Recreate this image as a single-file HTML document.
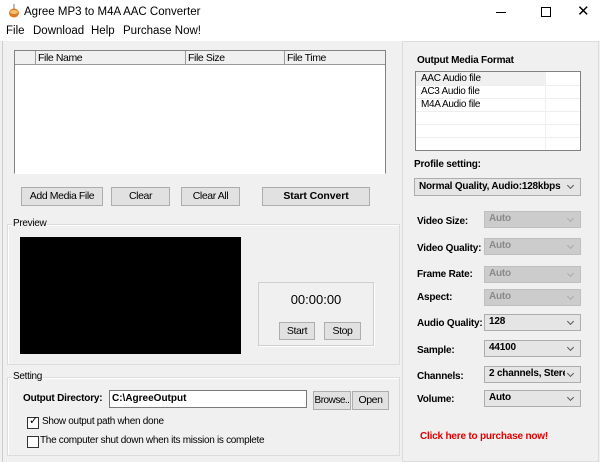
<!DOCTYPE html>
<html><head><style>
*{box-sizing:border-box;margin:0;padding:0}
body{width:600px;height:462px;background:#f0f0f0;font-family:"Liberation Sans",sans-serif;font-size:11px;color:#000;position:relative;overflow:hidden}
.a{position:absolute;white-space:nowrap}
.btn{position:absolute;background:#e1e1e1;border:1px solid #adadad;text-align:center;font-size:10.5px;letter-spacing:-0.4px;white-space:nowrap}
.grp{position:absolute;border:1px solid #dcdcdc;box-shadow:inset 1px 1px 0 #fff}
.dd{position:absolute;background:#e5e5e5;border:1px solid #adadad;height:17px;font-weight:bold;font-size:10px;letter-spacing:-0.2px;padding:1px 4px;overflow:hidden;white-space:nowrap}
.dd.dis{background:#ccc;border-color:#bfbfbf;color:#8a8a8a}
.dd:after{content:"";position:absolute;right:7px;top:4px;width:4px;height:4px;border-right:1px solid #555;border-bottom:1px solid #555;transform:rotate(45deg)}
.dd.dis:after{border-color:#aaa}
.lb{position:absolute;font-weight:bold;font-size:10px;letter-spacing:-0.2px;white-space:nowrap}
</style></head><body>
<div class="a" style="left:0;top:0;width:600px;height:41px;background:#fff"></div>
<svg class="a" style="left:8px;top:4px" width="12" height="14" viewBox="0 0 12 14"><rect x="5" y="0" width="2" height="5" fill="#bbb"/><ellipse cx="6" cy="9" rx="5" ry="4.5" fill="#e07a20"/><ellipse cx="6" cy="8" rx="4" ry="2" fill="#f5c070"/></svg>
<div class="a" style="left:24px;top:6px;font-size:11.5px">Agree MP3 to M4A AAC Converter</div>
<div class="a" style="left:496px;top:12px;width:10px;height:1px;background:#000"></div>
<div class="a" style="left:541px;top:7px;width:10px;height:10px;border:1px solid #000"></div>
<div class="a" style="left:577px;top:5px;font-size:15px;line-height:14px">✕</div>
<div class="a" style="left:6px;top:25px;font-size:11.5px">File</div>
<div class="a" style="left:33px;top:25px;font-size:11.5px">Download</div>
<div class="a" style="left:91px;top:25px;font-size:11.5px">Help</div>
<div class="a" style="left:123px;top:25px;font-size:11.5px">Purchase Now!</div>
<div class="a" style="left:2px;top:41px;width:1px;height:421px;background:#ccc"></div>

<div class="a" style="left:14px;top:50px;width:372px;height:124px;background:#fff;border:1px solid #828282;border-bottom-color:#fff"></div>
<div class="a" style="left:15px;top:51px;width:370px;height:14px;background:#f0f0f0;border-bottom:1px solid #999"></div>
<div class="a" style="left:35px;top:51px;width:1px;height:14px;background:#999"></div>
<div class="a" style="left:185px;top:51px;width:1px;height:14px;background:#999"></div>
<div class="a" style="left:284px;top:51px;width:1px;height:14px;background:#999"></div>
<div class="a" style="left:38px;top:52px;font-size:10.5px;letter-spacing:-.4px">File Name</div>
<div class="a" style="left:188px;top:52px;font-size:10.5px;letter-spacing:-.4px">File Size</div>
<div class="a" style="left:287px;top:52px;font-size:10.5px;letter-spacing:-.4px">File Time</div>

<div class="btn" style="left:21px;top:187px;width:82px;height:19px;line-height:17px">Add Media File</div>
<div class="btn" style="left:111px;top:187px;width:59px;height:19px;line-height:17px">Clear</div>
<div class="btn" style="left:181px;top:187px;width:59px;height:19px;line-height:17px">Clear All</div>
<div class="btn" style="left:262px;top:187px;width:108px;height:19px;line-height:17px;font-weight:bold;letter-spacing:-0.1px">Start Convert</div>

<div class="grp" style="left:7px;top:224px;width:393px;height:141px"></div>
<div class="a" style="left:12px;top:218px;background:#f0f0f0;padding:0 1px;font-size:10px;letter-spacing:-.3px">Preview</div>
<div class="a" style="left:20px;top:237px;width:221px;height:117px;background:#000"></div>
<div class="a" style="left:258px;top:282px;width:116px;height:64px;border:1px solid #cfcfcf;box-shadow:1px 1px 0 #fff"></div>
<div class="a" style="left:258px;top:292px;width:116px;text-align:center;font-size:13px">00:00:00</div>
<div class="btn" style="left:279px;top:322px;width:36px;height:18px;line-height:16px">Start</div>
<div class="btn" style="left:324px;top:322px;width:37px;height:18px;line-height:16px">Stop</div>

<div class="grp" style="left:7px;top:377px;width:393px;height:79px"></div>
<div class="a" style="left:12px;top:371px;background:#f0f0f0;padding:0 1px;font-size:10px;letter-spacing:-.3px">Setting</div>
<div class="lb" style="left:23px;top:393px">Output Directory:</div>
<div class="a" style="left:109px;top:390px;width:198px;height:18px;background:#fff;border:1px solid #7a7a7a;font-weight:bold;font-size:10px;padding:2px 2px">C:\AgreeOutput</div>
<div class="btn" style="left:313px;top:391px;width:38px;height:19px;line-height:17px;font-size:10px;letter-spacing:-.5px">Browse..</div>
<div class="btn" style="left:352px;top:391px;width:37px;height:19px;line-height:17px">Open</div>
<div class="a" style="left:27px;top:417px;width:12px;height:12px;background:#fff;border:1px solid #333"></div>
<div class="a" style="left:29px;top:414px;font-size:11px">✓</div>
<div class="a" style="left:42px;top:416px;font-size:10px;letter-spacing:-.3px">Show output path when done</div>
<div class="a" style="left:27px;top:436px;width:12px;height:12px;background:#fff;border:1px solid #333"></div>
<div class="a" style="left:40px;top:435px;font-size:10px;letter-spacing:-.3px">The computer shut down when its mission is complete</div>

<div class="a" style="left:402px;top:41px;width:197px;height:421px;border:1px solid #dcdcdc"></div>
<div class="lb" style="left:417px;top:55px">Output Media Format</div>
<div class="a" style="left:415px;top:71px;width:166px;height:80px;background:#fff;border:1px solid #828282"></div>
<div class="a" style="left:416px;top:72px;width:129px;height:13px;background:#f0f0f0"></div>
<div class="a" style="left:545px;top:72px;width:1px;height:78px;background:#eee"></div>
<div class="a" style="left:416px;top:85px;width:164px;height:1px;background:#eee"></div>
<div class="a" style="left:416px;top:98px;width:164px;height:1px;background:#eee"></div>
<div class="a" style="left:416px;top:111px;width:164px;height:1px;background:#eee"></div>
<div class="a" style="left:416px;top:124px;width:164px;height:1px;background:#eee"></div>
<div class="a" style="left:416px;top:137px;width:164px;height:1px;background:#eee"></div>
<div class="a" style="left:421px;top:73px;font-size:10px;letter-spacing:-.3px">AAC Audio file</div>
<div class="a" style="left:421px;top:86px;font-size:10px;letter-spacing:-.3px">AC3 Audio file</div>
<div class="a" style="left:421px;top:99px;font-size:10px;letter-spacing:-.3px">M4A Audio file</div>
<div class="lb" style="left:414px;top:159px">Profile setting:</div>
<div class="dd" style="left:414px;top:178px;width:167px;height:18px;padding-top:2px">Normal Quality, Audio:128kbps</div>

<div class="lb" style="left:417px;top:216px">Video Size:</div>
<div class="dd dis" style="left:484px;top:211px;width:97px">Auto</div>
<div class="lb" style="left:417px;top:243px">Video Quality:</div>
<div class="dd dis" style="left:484px;top:238px;width:97px">Auto</div>
<div class="lb" style="left:417px;top:269px">Frame Rate:</div>
<div class="dd dis" style="left:484px;top:266px;width:97px">Auto</div>
<div class="lb" style="left:417px;top:292px">Aspect:</div>
<div class="dd dis" style="left:484px;top:289px;width:97px">Auto</div>
<div class="lb" style="left:417px;top:318px">Audio Quality:</div>
<div class="dd" style="left:484px;top:314px;width:97px">128</div>
<div class="lb" style="left:417px;top:345px">Sample:</div>
<div class="dd" style="left:484px;top:340px;width:97px">44100</div>
<div class="lb" style="left:417px;top:371px">Channels:</div>
<div class="dd" style="left:484px;top:366px;width:97px"><span style="display:inline-block;width:76px;overflow:hidden;vertical-align:top">2 channels, Stereo</span></div>
<div class="lb" style="left:417px;top:394px">Volume:</div>
<div class="dd" style="left:484px;top:390px;width:97px">Auto</div>
<div class="lb" style="left:420px;top:431px;color:#e00000">Click here to purchase now!</div>
</body></html>
